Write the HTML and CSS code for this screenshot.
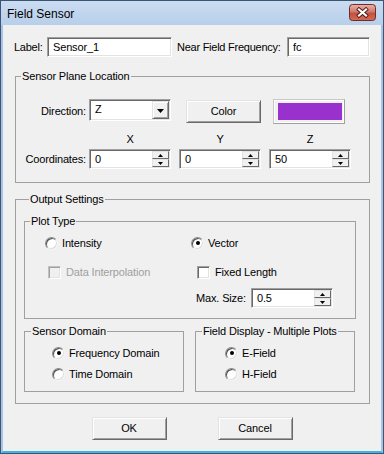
FILE: index.html
```html
<!DOCTYPE html>
<html>
<head>
<meta charset="utf-8">
<title>Field Sensor</title>
<link rel="stylesheet" href="styles.css">
</head>
<body>
<div class="window">
  <div class="titlebar">
    <span class="title">Field Sensor</span>
    <span class="close">
      <svg width="27" height="17" viewBox="0 0 27 17">
        <defs>
          <linearGradient id="cg" x1="0" y1="0" x2="0" y2="1">
            <stop offset="0" stop-color="#e9b2a8"/>
            <stop offset="0.45" stop-color="#d27a6c"/>
            <stop offset="0.55" stop-color="#c4503f"/>
            <stop offset="1" stop-color="#d66a55"/>
          </linearGradient>
        </defs>
        <rect x="0.5" y="0.5" width="26" height="16" rx="3" ry="3" fill="url(#cg)" stroke="#6e2d25"/>
        <path d="M10 5.5 L17 11.5 M17 5.5 L10 11.5" stroke="#4a1a14" stroke-width="4" stroke-linecap="square" fill="none"/>
        <path d="M10 5.5 L17 11.5 M17 5.5 L10 11.5" stroke="#ffffff" stroke-width="2.2" stroke-linecap="square" fill="none"/>
      </svg>
    </span>
  </div>
  <div class="frame">
    <div class="toprow">
      <span class="lbl">Label:</span>
      <div class="edit"><span class="val">Sensor_1</span></div>
      <span></span>
      <span class="lbl">Near Field Frequency:</span>
      <div class="edit"><span class="val">fc</span></div>
    </div>

    <fieldset class="grp plane">
      <legend>Sensor Plane Location</legend>
      <div class="prow prow-dir">
        <span class="rlbl">Direction:</span>
        <div class="combo">
          <span class="val">Z</span>
          <span class="dd"><svg width="7" height="4" viewBox="0 0 7 4"><polygon points="0,0 7,0 3.5,4" fill="#000"/></svg></span>
        </div>
        <span></span>
        <div class="btn color-btn">Color</div>
        <span></span>
        <div class="swatch"><div class="swatch-fill"></div></div>
      </div>
      <div class="prow prow-axis">
        <span></span>
        <span class="axis">X</span>
        <span></span>
        <span class="axis">Y</span>
        <span></span>
        <span class="axis">Z</span>
      </div>
      <div class="prow prow-coord">
        <span class="rlbl">Coordinates:</span>
        <div class="spin">
          <span class="val">0</span>
          <span class="sbs">
            <span class="sb"><svg width="5" height="3" viewBox="0 0 5 3"><polygon points="2.5,0 5,3 0,3" fill="#000"/></svg></span>
            <span class="sb"><svg width="5" height="3" viewBox="0 0 5 3"><polygon points="0,0 5,0 2.5,3" fill="#000"/></svg></span>
          </span>
        </div>
        <span></span>
        <div class="spin">
          <span class="val">0</span>
          <span class="sbs">
            <span class="sb"><svg width="5" height="3" viewBox="0 0 5 3"><polygon points="2.5,0 5,3 0,3" fill="#000"/></svg></span>
            <span class="sb"><svg width="5" height="3" viewBox="0 0 5 3"><polygon points="0,0 5,0 2.5,3" fill="#000"/></svg></span>
          </span>
        </div>
        <span></span>
        <div class="spin">
          <span class="val">50</span>
          <span class="sbs">
            <span class="sb"><svg width="5" height="3" viewBox="0 0 5 3"><polygon points="2.5,0 5,3 0,3" fill="#000"/></svg></span>
            <span class="sb"><svg width="5" height="3" viewBox="0 0 5 3"><polygon points="0,0 5,0 2.5,3" fill="#000"/></svg></span>
          </span>
        </div>
      </div>
    </fieldset>

    <fieldset class="grp output">
      <legend>Output Settings</legend>
      <fieldset class="grp plot">
        <legend>Plot Type</legend>
        <div class="trow trow1">
          <span></span>
          <label class="opt"><span class="radio"></span><span>Intensity</span></label>
          <label class="opt"><span class="radio on"></span><span>Vector</span></label>
        </div>
        <div class="trow trow2">
          <span></span>
          <label class="opt opt-di disabled"><span class="check off"></span><span>Data Interpolation</span></label>
          <label class="opt opt-fl"><span class="check"></span><span>Fixed Length</span></label>
        </div>
        <div class="trow trow3">
          <span></span>
          <span></span>
          <div class="maxsize">
            <span class="ms-lbl">Max. Size:</span>
            <div class="spin">
              <span class="val">0.5</span>
              <span class="sbs">
                <span class="sb"><svg width="5" height="3" viewBox="0 0 5 3"><polygon points="2.5,0 5,3 0,3" fill="#000"/></svg></span>
                <span class="sb"><svg width="5" height="3" viewBox="0 0 5 3"><polygon points="0,0 5,0 2.5,3" fill="#000"/></svg></span>
              </span>
            </div>
          </div>
        </div>
      </fieldset>
      <div class="bgroups">
        <fieldset class="grp small">
          <legend>Sensor Domain</legend>
          <div class="opts sd">
            <label class="opt"><span class="radio on"></span><span>Frequency Domain</span></label>
            <label class="opt second"><span class="radio"></span><span>Time Domain</span></label>
          </div>
        </fieldset>
        <fieldset class="grp small">
          <legend>Field Display - Multiple Plots</legend>
          <div class="opts fd">
            <label class="opt"><span class="radio on"></span><span>E-Field</span></label>
            <label class="opt second"><span class="radio"></span><span>H-Field</span></label>
          </div>
        </fieldset>
      </div>
    </fieldset>

    <div class="btnrow">
      <div class="btn dlg-btn">OK</div>
      <div class="btn dlg-btn">Cancel</div>
    </div>
  </div>
</div>
</body>
</html>
```

FILE: styles.css
```css
* { box-sizing: border-box; }
html, body { margin: 0; padding: 0; }
body {
  width: 384px;
  height: 454px;
  overflow: hidden;
  font-family: "Liberation Sans", Arial, sans-serif;
  font-size: 11px;
  letter-spacing: -0.15px;
  color: #000;
  background: #f0f0f0;
}
.window {
  width: 384px;
  height: 454px;
  border: 1px solid #3b5674;
  background: linear-gradient(#cadcf1, #b8cfea 24px, #b0c9e8);
  display: flex;
  flex-direction: column;
}
.titlebar {
  height: 24px;
  flex: none;
  display: flex;
  align-items: flex-start;
  justify-content: space-between;
  padding: 0 7px 0 6px;
}
.title {
  font-size: 12px;
  line-height: 26px;
  letter-spacing: 0;
  color: #000;
}
.close { margin-top: 3px; width: 27px; height: 17px; display: block; }
.close svg { display: block; }
.frame {
  flex: 1;
  border-left: 2px solid #a8c3e5;
  border-right: 2px solid #a8c3e5;
  border-bottom: 2px solid #3ab7df;
  background: #f0f0f0;
}

/* top row */
.toprow {
  display: grid;
  grid-template-columns: 33px 125px 5px 110px 83px;
  height: 20px;
  margin: 12px 0 0 11px;
  align-items: center;
}
.lbl { line-height: 13px; white-space: nowrap; letter-spacing: -0.25px; }

/* sunken edit */
.edit, .spin, .combo {
  height: 20px;
  background: #fff;
  border: 1px solid;
  border-color: #a0a0a0 #ffffff #ffffff #a0a0a0;
  padding: 1px;
  box-shadow: inset 1px 1px 0 #696969, inset -1px -1px 0 #e3e3e3;
  display: flex;
}
.val {
  flex: 1;
  padding-left: 4px;
  line-height: 16px;
  white-space: nowrap;
}

/* group boxes */
.grp {
  margin: 0;
  padding: 0;
  min-width: 0;
  border: 1px solid #a0a0a0;
}
.grp legend {
  padding: 0 1px;
  margin-left: 5px;
  line-height: 13px;
  font-size: 11px;
  white-space: nowrap;
}
.plane {
  width: 355px;
  margin: 13px 0 0 12px;
  padding: 16px 0 13px 0;
}
.prow {
  display: grid;
  grid-template-columns: 73px 82px 8px 82px 8px 82px;
}
.prow-dir { height: 25px; }
.prow-axis { height: 13px; margin-top: 9px; }
.prow-coord { height: 20px; margin-top: 3px; align-items: center; }
.rlbl {
  text-align: right;
  padding-right: 3px;
  line-height: 13px;
  align-self: center;
  white-space: nowrap;
}
.axis { text-align: center; line-height: 13px; }

.combo { height: 22px; align-self: start; }
.dd {
  width: 17px;
  flex: none;
  background: #f0f0f0;
  border: 1px solid;
  border-color: #e3e3e3 #696969 #696969 #e3e3e3;
  box-shadow: inset 1px 1px 0 #ffffff, inset -1px -1px 0 #a0a0a0;
  display: flex;
  align-items: center;
  justify-content: center;
}
.dd svg { display: block; margin-top: 1px; }

.btn {
  background: #f0f0f0;
  border: 1px solid;
  border-color: #e3e3e3 #696969 #696969 #e3e3e3;
  box-shadow: inset 1px 1px 0 #ffffff, inset -1px -1px 0 #a0a0a0;
  display: flex;
  align-items: center;
  justify-content: center;
  line-height: 13px;
}
.color-btn {
  width: 75px;
  height: 23px;
  margin: 1px 0 0 7px;
}
.swatch {
  width: 72px;
  height: 25px;
  margin-left: 4px;
  border: 1px solid;
  border-color: #c8c8c8 #a0a0a0 #a0a0a0 #c8c8c8;
  box-shadow: inset 1px 1px 0 #ffffff, inset -1px -1px 0 #ffffff;
  padding: 3px 2px 3px 4px;
}
.swatch-fill {
  width: 100%;
  height: 100%;
  background: #9932cc;
}

/* spin */
.spin { width: 82px; }
.sbs {
  width: 17px;
  flex: none;
  display: flex;
  flex-direction: column;
}
.sb {
  height: 8px;
  background: #f0f0f0;
  border: 1px solid;
  border-color: #e3e3e3 #696969 #696969 #e3e3e3;
  display: flex;
  align-items: center;
  justify-content: center;
}
.sb svg { display: block; }

/* output */
.output {
  width: 355px;
  margin: 10px 0 0 12px;
  padding: 0 13px 11px 8px;
}
.plot {
  margin-top: 9px;
  padding: 7px 0 10px 0;
}
.trow {
  display: grid;
  grid-template-columns: 20px 146px 1fr;
}
.trow1 { height: 16px; }
.trow2 { height: 16px; margin-top: 13px; }
.trow3 { height: 20px; margin-top: 8px; }

.opt {
  display: flex;
  align-items: center;
  gap: 4px;
  height: 16px;
  line-height: 13px;
  white-space: nowrap;
}
.opt-di { margin-left: 3px; gap: 5px; }
.opt-fl { margin-left: 6px; gap: 5px; }
.disabled { color: #a0a0a0; }

.radio {
  width: 13px;
  height: 13px;
  flex: none;
  border-radius: 50%;
  background: #fff;
  border: 1px solid;
  border-color: #8a8a8a #f4f4f4 #f4f4f4 #8a8a8a;
  box-shadow: inset 1px 1px 0 #505050, inset -1px -1px 0 #dcdcdc;
  display: flex;
  align-items: center;
  justify-content: center;
}
.radio.on::after {
  content: "";
  width: 4px;
  height: 4px;
  border-radius: 50%;
  background: #000;
}
.check {
  width: 13px;
  height: 13px;
  flex: none;
  background: #fff;
  border: 1px solid;
  border-color: #a0a0a0 #ffffff #ffffff #a0a0a0;
  box-shadow: inset 1px 1px 0 #696969, inset -1px -1px 0 #e3e3e3;
}
.check.off {
  background: #f0f0f0;
  border-color: #c0c0c0 #ffffff #ffffff #c0c0c0;
  box-shadow: inset 1px 1px 0 #a0a0a0, inset -1px -1px 0 #e3e3e3;
}

.maxsize {
  display: flex;
  align-items: center;
  margin-left: 5px;
}
.ms-lbl { width: 55px; line-height: 13px; white-space: nowrap; }

.bgroups {
  display: flex;
  gap: 11px;
  margin-top: 6px;
}
.small {
  width: 160px;
  padding: 7px 0 9px 0;
}
.small legend { margin-left: 6px; }
.opts { display: flex; flex-direction: column; }
.sd { padding-left: 27px; }
.fd { padding-left: 29px; }
.opt.second { margin-top: 5px; }

.btnrow {
  display: flex;
  justify-content: center;
  gap: 51px;
  margin-top: 13px;
}
.dlg-btn {
  width: 75px;
  height: 23px;
}
```
